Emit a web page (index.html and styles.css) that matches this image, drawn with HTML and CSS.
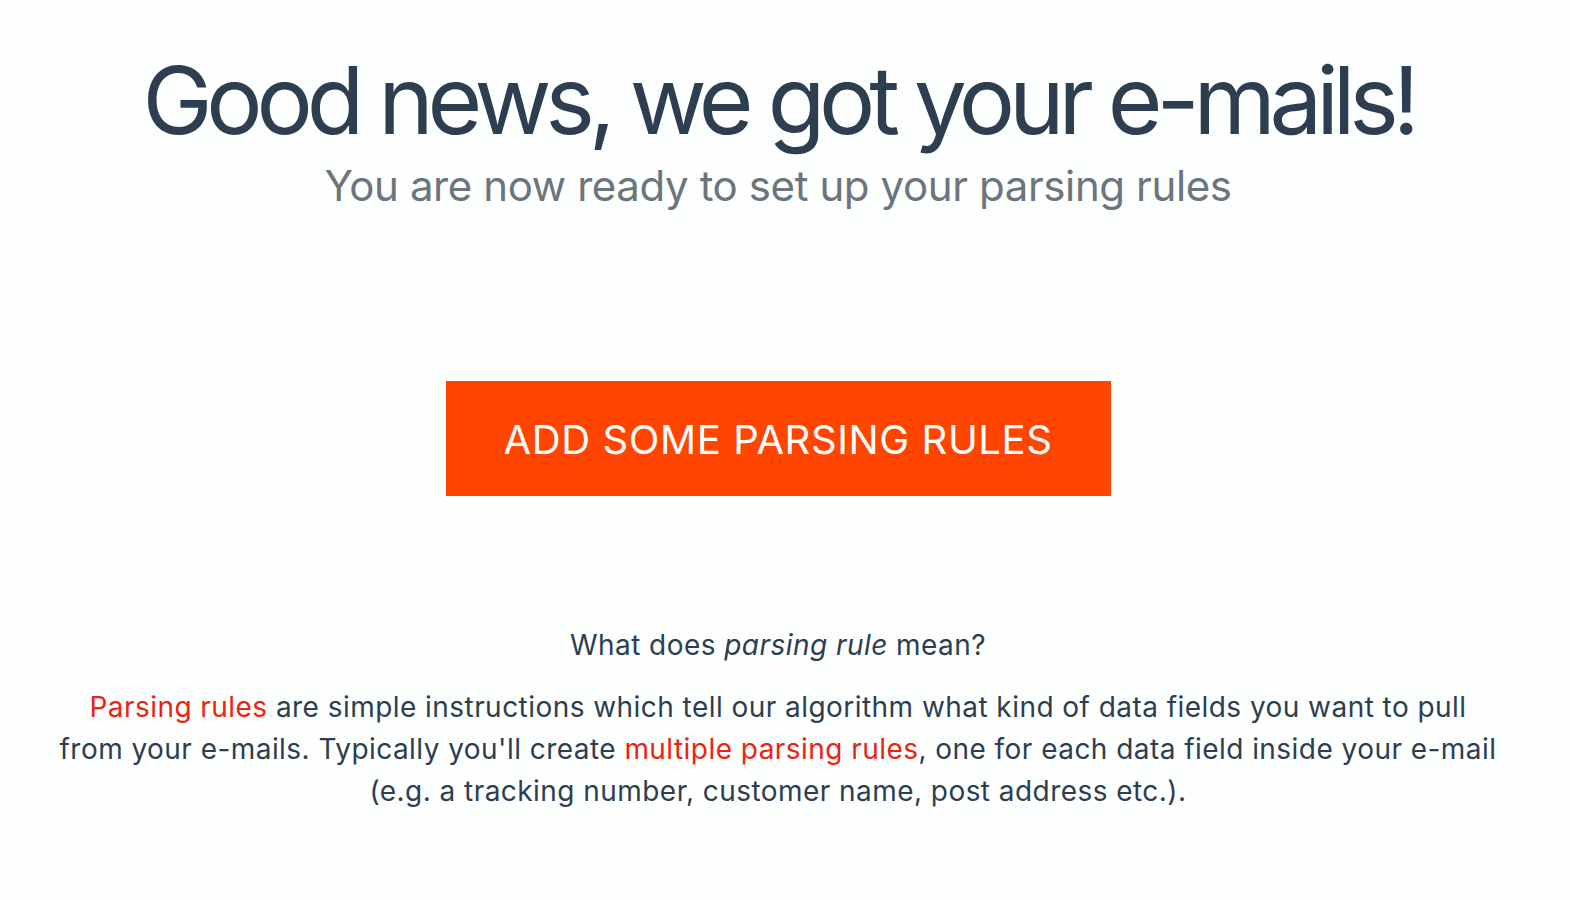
FILE: index.html
```html
<!DOCTYPE html>
<html lang="en">
<head>
<meta charset="utf-8">
<title>Good news</title>
<link rel="stylesheet" href="styles.css">
</head>
<body>
<main class="page">
  <header class="hero">
    <h1 class="title">Good news, we got your e-mails!</h1>
    <p class="subtitle">You are now ready to set up your parsing rules</p>
  </header>
  <div class="cta">
    <a class="btn" href="#">ADD SOME PARSING RULES</a>
  </div>
  <section class="explain">
    <p class="question">What does <em>parsing rule</em> mean?</p>
    <p class="answer"><span class="hl">Parsing rules</span> are simple instructions which tell our algorithm what kind of data fields you want to pull from your <span class="nw">e-mails.</span> Typically you'll create <span class="hl">multiple parsing rules</span>, one for each data field inside your <span class="nw">e-mail</span> (e.g. a tracking number, customer name, post address etc.).</p>
  </section>
</main>
</body>
</html>
```

FILE: styles.css
```css
html, body {
  margin: 0;
  padding: 0;
  background: #fdfefe;
}
body {
  font-family: Inter, "Noto Sans", sans-serif;
  color: #2c3e50;
}
.page {
  width: 1556px;
  display: flex;
  flex-direction: column;
  align-items: center;
  padding-top: 49px;
}
.hero {
  text-align: center;
}
.title {
  margin: 0;
  font-size: 94px;
  font-weight: 400;
  line-height: 1.1;
  letter-spacing: -6.2px;
}
.subtitle {
  margin: 9px 0 0;
  font-size: 42px;
  color: #6c757d;
  line-height: 1.2;
  letter-spacing: -0.4px;
}
.cta {
  margin-top: 169px;
}
.btn {
  display: block;
  width: 665px;
  height: 115px;
  background: #ff4500;
  color: #fff;
  font-size: 40px;
  letter-spacing: 0.6px;
  line-height: 117px;
  text-align: center;
  text-decoration: none;
}
.explain {
  margin-top: 128px;
  text-align: center;
  width: 1446px;
  font-size: 28px;
  line-height: 42px;
  letter-spacing: 0.45px;
}
.question {
  margin: 0 0 20px;
}
.answer {
  margin: 0;
}
.nw {
  white-space: nowrap;
}
.hl {
  color: #ee2211;
}
```
